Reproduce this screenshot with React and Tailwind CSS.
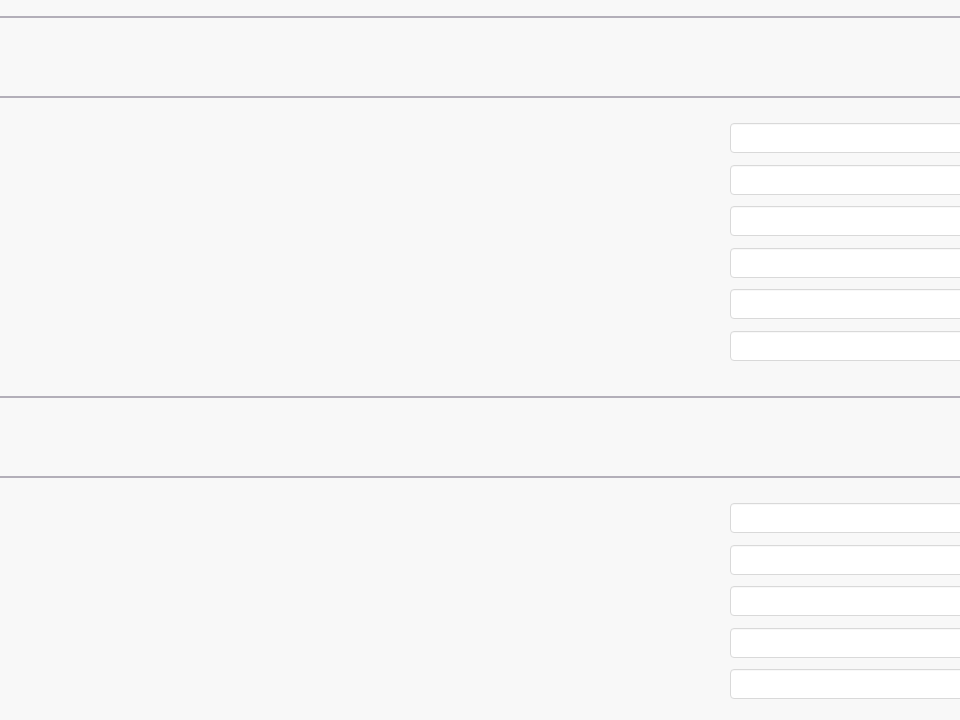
import React from 'react';

function Field() {
  return (
    <input
      type="text"
      className="block h-[30px] w-[320px] shrink-0 rounded-[4px] border border-[#d9d9d9] bg-white shadow-[inset_0_1px_1px_rgba(0,0,0,0.03)]"
    />
  );
}

function Section({ count }) {
  return (
    <>
      {/* Header */}
      <div className="h-[80px] border-t-2 border-[#b3afb9]" />
      {/* Fields */}
      <div className="flex h-[300px] border-t-2 border-[#b3afb9] pt-[25px]">
        <div className="w-[730px] shrink-0" />
        <div className="flex flex-col gap-[11.5px]">
          {Array.from({ length: count }).map((_, i) => (
            <Field key={i} />
          ))}
        </div>
      </div>
    </>
  );
}

export default function App() {
  return (
    <div className="h-[720px] w-[960px] overflow-hidden bg-[#f8f8f8] font-['Liberation_Sans',sans-serif]">
      <div className="h-[16px]" />
      <Section count={6} />
      <Section count={5} />
    </div>
  );
}
